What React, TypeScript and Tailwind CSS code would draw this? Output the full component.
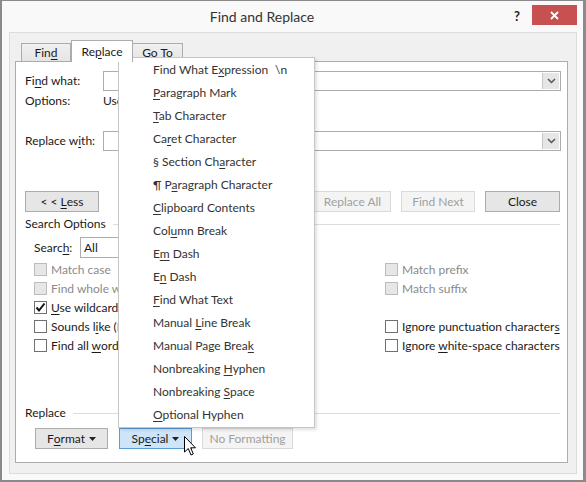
import React from 'react'

// access-key underline helper
const u = (s: string, i: number) => (
  <>
    {s.slice(0, i)}
    <span className="underline decoration-1 underline-offset-[2px]">{s[i]}</span>
    {s.slice(i + 1)}
  </>
)

const MENU: [string, number, string?][] = [
  ['Find What Expression', 11, '\\n'],
  ['Paragraph Mark', 0],
  ['Tab Character', 0],
  ['Caret Character', 2],
  ['§ Section Character', 12],
  ['¶ Paragraph Character', 3],
  ['Clipboard Contents', 0],
  ['Column Break', 3],
  ['Em Dash', 1],
  ['En Dash', 1],
  ['Find What Text', 0],
  ['Manual Line Break', 7],
  ['Manual Page Break', 16],
  ['Nonbreaking Hyphen', 12],
  ['Nonbreaking Space', 12],
  ['Optional Hyphen', 0],
]

function Chevron() {
  return (
    <svg width="9" height="6" viewBox="0 0 9 6">
      <path d="M1 1 L4.5 4.5 L8 1" fill="none" stroke="#555" strokeWidth="1.5" />
    </svg>
  )
}

function Combo() {
  return (
    <div className="flex-1 h-[20px] border border-[#acacac] bg-white flex justify-end p-px">
      <div className="w-[17px] h-full bg-[#e6e6e6] border-l border-[#c8c8c8] flex items-center justify-center">
        <Chevron />
      </div>
    </div>
  )
}

function Btn({ children, w, kind = 'normal' }: { children: React.ReactNode; w: string; kind?: 'normal' | 'disabled' | 'hot' }) {
  const cls =
    kind === 'disabled'
      ? 'bg-[#f4f4f4] border-[#dadada] text-[#a0a0a0]'
      : kind === 'hot'
        ? 'bg-[#cde4f9] border-[#5d9bd6] text-[#1a1a1a]'
        : 'bg-[#e6e6e6] border-[#acacac] text-[#1a1a1a]'
  return (
    <div className={`${w} h-[21px] border ${cls} flex items-center justify-center shrink-0 whitespace-pre`}>{children}</div>
  )
}

function Check({ label, disabled = false, checked = false }: { label: React.ReactNode; disabled?: boolean; checked?: boolean }) {
  return (
    <div className="h-[19px] flex items-center gap-[4px]">
      <div
        className={`w-[13px] h-[13px] border flex items-center justify-center shrink-0 ${
          disabled ? 'bg-[#e6e6e6] border-[#bcbcbc]' : 'bg-white border-[#707070]'
        }`}
      >
        {checked && (
          <svg width="11" height="11" viewBox="0 0 11 11">
            <path d="M1.5 5.5 L4 8.5 L9.5 1.5" fill="none" stroke="#111" strokeWidth="2" />
          </svg>
        )}
      </div>
      <span className={`whitespace-nowrap ${disabled ? 'text-[#8a8a8a]' : 'text-[#1a1a1a]'}`}>{label}</span>
    </div>
  )
}

function Caret() {
  return (
    <svg width="7" height="4" viewBox="0 0 7 4" className="ml-[4px]">
      <path d="M0 0 H7 L3.5 4 Z" fill="#222" />
    </svg>
  )
}

export default function App() {
  return (
    <div className="relative w-[586px] h-[482px] bg-[#8a8a8a] pl-[2px] pt-px pr-[3px] pb-[2px] font-['Lato',sans-serif] text-[12px] leading-none text-[#1a1a1a] overflow-hidden">
      <div className="h-full bg-[#f9f9f9] flex flex-col">
        {/* Title bar */}
        <div className="h-[31px] flex items-start shrink-0">
          <div className="flex-1 h-full flex items-center justify-center pl-[13px] text-[14px] text-[#333]">Find and Replace</div>
          <div className="w-[16px] mt-[9px] text-center text-[13px] font-bold text-[#222]">?</div>
          <div className="ml-[7px] mr-[6px] mt-[4px] w-[45px] h-[20px] bg-[#c75050] flex items-center justify-center">
            <svg width="9" height="9" viewBox="0 0 9 9">
              <path d="M1 1 L8 8 M8 1 L1 8" stroke="#fff" strokeWidth="1.8" />
            </svg>
          </div>
        </div>

        {/* Dialog panel */}
        <div className="flex-1 ml-[7px] mr-[6px] mb-[6px] border border-[#dcdcdc] bg-[#f0f0f0] flex flex-col pt-[7px]">
          {/* Tabs */}
          <div className="h-[21px] ml-[8px] flex items-end shrink-0">
            <div className="ml-[3px] w-[50px] h-[18px] border border-b-0 border-[#acacac] bg-gradient-to-b from-[#f0f0f0] to-[#e5e5e5] flex items-center justify-center">
              {u('Find', 3)}
            </div>
            <div className="relative z-10 -mb-px w-[62px] h-[22px] border border-b-0 border-[#acacac] bg-white flex items-center justify-center">
              {u('Replace', 2)}
            </div>
            <div className="w-[50px] h-[18px] border border-b-0 border-l-0 border-[#acacac] bg-gradient-to-b from-[#f0f0f0] to-[#e5e5e5] flex items-center justify-center">
              Go To
            </div>
          </div>

          {/* Tab page */}
          <div className="flex-1 ml-[5px] mr-[8px] mb-[10px] border border-[#acacac] bg-white flex flex-col pl-[9px] pr-[6px]">
            <div className="mt-[9px] h-[20px] flex items-center">
              <span className="w-[78px] shrink-0">{u('Find what:', 2)}</span>
              <Combo />
            </div>
            <div className="h-[20px] flex items-center">
              <span className="w-[78px] shrink-0">Options:</span>
              <span>Use wildcards</span>
            </div>
            <div className="mt-[20px] h-[20px] flex items-center">
              <span className="w-[78px] shrink-0">{u('Replace with:', 9)}</span>
              <Combo />
            </div>

            <div className="mt-[40px] flex items-center pr-px">
              <Btn w="w-[74px]">
                {'< < '}
                {u('Less', 0)}
              </Btn>
              <div className="flex-1" />
              <Btn w="w-[77px]" kind="disabled">Replace All</Btn>
              <div className="w-[10px]" />
              <Btn w="w-[74px]" kind="disabled">Find Next</Btn>
              <div className="w-[10px]" />
              <Btn w="w-[75px]">Close</Btn>
            </div>

            <div className="mt-[2px] h-[20px] flex items-center pr-px">
              <span>Search Options</span>
              <div className="flex-1 h-px bg-[#dcdcdc] ml-[7px]" />
            </div>
            <div className="mt-[3px] h-[21px] flex items-center pl-[9px]">
              <span className="w-[46px] shrink-0">{u('Search:', 5)}</span>
              <div className="w-[110px] h-full border border-[#acacac] flex items-center pl-[3px]">All</div>
            </div>

            <div className="mt-[2px] grid grid-cols-[351px_1fr] pl-[9px]">
              <Check label="Match case" disabled />
              <Check label="Match prefix" disabled />
              <Check label="Find whole words only" disabled />
              <Check label="Match suffix" disabled />
              <Check label={<>{u('Use wildcards', 0)}</>} checked />
              <div />
              <Check label={<>{u('Sounds like (English)', 8)}</>} />
              <Check label={<>{u('Ignore punctuation characters', 28)}</>} />
              <Check label={<>{u('Find all word forms (English)', 9)}</>} />
              <Check label={<>{u('Ignore white-space characters', 7)}</>} />
            </div>

            <div className="mt-[48px] h-[20px] flex items-center pr-px">
              <span>Replace</span>
              <div className="flex-1 h-px bg-[#dcdcdc] ml-[7px]" />
            </div>
            <div className="mt-[5px] flex items-center pl-[10px]">
              <Btn w="w-[73px]">
                {u('Format', 1)}
                <Caret />
              </Btn>
              <div className="w-[11px]" />
              <Btn w="w-[73px]" kind="hot">
                {u('Special', 2)}
                <Caret />
              </Btn>
              <div className="w-[10px]" />
              <Btn w="w-[91px]" kind="disabled">No Formatting</Btn>
            </div>
          </div>
        </div>
      </div>

      {/* Special dropdown menu */}
      <div className="absolute left-[118px] top-[57px] w-[197px] h-[371px] bg-white border border-[#c6c6c6] shadow-[2px_2px_3px_rgba(0,0,0,0.12)] pt-0 text-[#333]">
        {MENU.map(([t, k, sc]) => (
          <div key={t} className="h-[23px] flex items-center pl-[34px] whitespace-nowrap">
            <span className="w-[122px]">{u(t, k)}</span>
            {sc && <span>{sc}</span>}
          </div>
        ))}
      </div>

      {/* mouse pointer */}
      <svg className="absolute left-[184px] top-[436px]" width="13" height="21" viewBox="0 0 13 21">
        <path d="M0.5 0.5 L0.5 16 L4.3 12.6 L7 19 L9.3 18 L6.7 11.8 L11.5 11.8 Z" fill="#fff" stroke="#000" strokeWidth="1" strokeLinejoin="round" />
      </svg>
    </div>
  )
}
